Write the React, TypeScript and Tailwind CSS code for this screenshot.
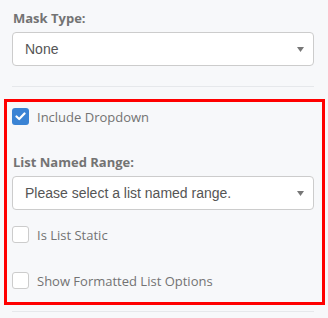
import React from 'react';

// Small caret used by the select boxes
const Caret = () => (
  <svg width="7" height="5" viewBox="0 0 7 5" className="shrink-0">
    <path d="M0 0 L7 0 L3.5 5 Z" fill="#777" />
  </svg>
);

const SelectBox = ({ value }: { value: string }) => (
  <div className="flex h-[34px] items-center justify-between rounded-[4px] border border-[#ccc] bg-white pl-[12px] pr-[9px] font-['Liberation_Sans',Arial,sans-serif] text-[14px] text-[#555]">
    <span>{value}</span>
    <Caret />
  </div>
);

const Checkbox = ({ checked, label }: { checked?: boolean; label: string }) => (
  <div className="flex h-[17px] items-center gap-[8px]">
    {checked ? (
      <div className="flex h-[17px] w-[17px] items-center justify-center rounded-[3px] bg-[#3a83d4]">
        <svg width="11" height="9" viewBox="0 0 11 9">
          <path d="M1.5 4.5 L4.2 7 L9.5 1.5" stroke="white" strokeWidth="2.2" fill="none" strokeLinecap="round" strokeLinejoin="round" />
        </svg>
      </div>
    ) : (
      <div className="h-[17px] w-[17px] rounded-[3px] border border-[#ccc] bg-white" />
    )}
    <span className="text-[13px] leading-[20px] text-[#737373]">{label}</span>
  </div>
);

const Label = ({ children }: { children: React.ReactNode }) => (
  <div className="pl-[1px] text-[13px] font-bold leading-[20px] text-[#737373]">{children}</div>
);

export default function App() {
  return (
    <div className="h-[318px] w-[328px] overflow-hidden bg-[#f7f8fa] pt-[8px] font-['Open_Sans',sans-serif]">
      <div className="pl-[12px] pr-[14px]">
        <Label>Mask Type:</Label>
        <div className="mt-[4px]">
          <SelectBox value="None" />
        </div>
        <div className="mt-[20px] border-t border-[#e6e8eb]" />
      </div>

      <div className="ml-[4px] mt-[12px] w-[321px] border-[3px] border-[#ff0000] pb-[13px] pl-[5px] pr-[8px] pt-[6px]">
        <Checkbox checked label="Include Dropdown" />
        <div className="mt-[27px]">
          <Label>List Named Range:</Label>
        </div>
        <div className="mt-[4px]">
          <SelectBox value="Please select a list named range." />
        </div>
        <div className="mt-[16px]">
          <Checkbox label="Is List Static" />
        </div>
        <div className="mt-[29px]">
          <Checkbox label="Show Formatted List Options" />
        </div>
      </div>

      <div className="ml-[12px] mr-[14px] mt-[6px] border-t border-[#e6e8eb]" />
    </div>
  );
}
